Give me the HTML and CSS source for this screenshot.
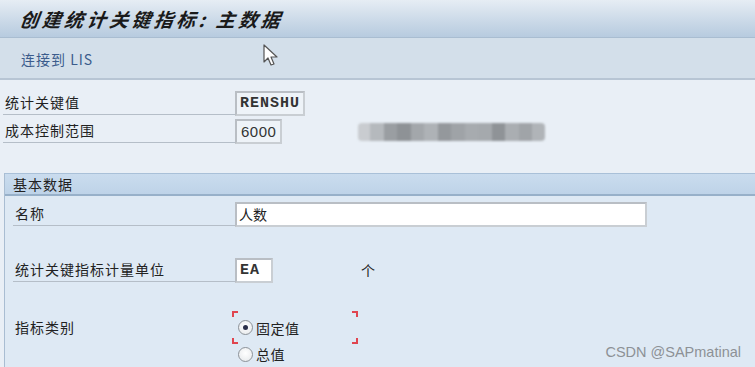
FILE: index.html
```html
<!DOCTYPE html>
<html lang="zh">
<head>
    <meta charset="UTF-8">
    <title>创建统计关键指标: 主数据</title>
    <link rel="stylesheet" href="styles.css">
</head>
<body>
    <header class="titlebar">
        <h1>创建统计关键指标: 主数据</h1>
    </header>
    <nav class="toolbar">
        <a class="tool-link">连接到 LIS</a>
        <svg class="cursor" width="16" height="24" viewBox="0 0 16 24">
            <path d="M1 1 L1 18 L5 14 L8 21 L11 20 L8 13 L14 13 Z" fill="#fff" stroke="#555" stroke-width="1.2" stroke-linejoin="round"/>
        </svg>
    </nav>

    <main class="content">
        <div class="row">
            <label class="label">统计关键值</label>
            <span class="field readonly mono">RENSHU</span>
        </div>
        <div class="row">
            <label class="label">成本控制范围</label>
            <span class="field readonly num">6000</span>
            <div class="blurred">
                <i style="width: 12px; background: #c9ccd0"></i>
                <i style="width: 14px; background: #b5b9bd"></i>
                <i style="width: 13px; background: #9a9ea2"></i>
                <i style="width: 14px; background: #8e9296"></i>
                <i style="width: 13px; background: #a3a7ab"></i>
                <i style="width: 14px; background: #aeb2b6"></i>
                <i style="width: 13px; background: #94989c"></i>
                <i style="width: 14px; background: #9fa3a7"></i>
                <i style="width: 13px; background: #a7abaf"></i>
                <i style="width: 14px; background: #a5a9ad"></i>
                <i style="width: 13px; background: #8f9397"></i>
                <i style="width: 14px; background: #aaaeb2"></i>
                <i style="width: 13px; background: #a0a4a8"></i>
                <i style="width: 13px; background: #b0b4b8"></i>
            </div>
        </div>

        <section class="group">
            <div class="group-title">基本数据</div>
            <div class="group-body">
                <div class="row">
                    <label class="label">名称</label>
                    <span class="field wide">人数</span>
                </div>
                <div class="row row-unit">
                    <label class="label">统计关键指标计量单位</label>
                    <span class="field mono short">EA</span>
                    <span class="unit-text">个</span>
                </div>
                <div class="row row-radio">
                    <label class="label plain">指标类别</label>
                    <div class="radio-box">
                        <span class="corner tl"></span>
                        <span class="corner tr"></span>
                        <span class="corner bl"></span>
                        <span class="corner br"></span>
                        <div class="radio"><span class="dot checked"></span>固定值</div>
                    </div>
                </div>
                <div class="row row-radio2">
                    <div class="radio"><span class="dot"></span>总值</div>
                </div>
            </div>
        </section>
    </main>

    <div class="watermark">CSDN @SAPmatinal</div>
</body>
</html>
```

FILE: styles.css
```css
* {
    margin: 0;
    padding: 0;
    box-sizing: border-box;
}

body {
    width: 755px;
    height: 367px;
    overflow: hidden;
    position: relative;
    font-family: "Noto Sans CJK SC", "Noto Sans", sans-serif;
    font-size: 14px;
    color: #222;
    background: #e9eff6;
}

/* Title */
.titlebar {
    height: 38px;
    background: linear-gradient(to bottom, #e6edf4, #c9d8e7 60%, #b7cbdf);
    border-bottom: 1px solid #a9bdd1;
    padding-left: 20px;
    display: flex;
    align-items: center;
}

.titlebar h1 {
    font-size: 19px;
    font-weight: bold;
    font-style: italic;
    letter-spacing: 3.4px;
    color: #1a1a1a;
    transform: skewX(-8deg);
    margin-top: -1px;
}

/* Toolbar */
.toolbar {
    height: 42px;
    background: #d3dfea;
    border-bottom: 2px solid #b7c5d4;
    padding-left: 21px;
    display: flex;
    align-items: center;
    position: relative;
}

.tool-link {
    color: #3b5c8c;
    font-size: 14px;
    letter-spacing: 1px;
    margin-top: 1px;
}

.cursor {
    position: absolute;
    left: 263px;
    top: 6px;
}

/* Content */
.content {
    padding-top: 11px;
}

.row {
    display: flex;
    align-items: flex-end;
    height: 25px;
    margin-bottom: 3px;
}

.label {
    width: 232px;
    margin-left: 3px;
    padding-left: 2px;
    padding-bottom: 2px;
    border-bottom: 1px solid #b5bec8;
    letter-spacing: 1px;
    line-height: 20px;
    margin-bottom: 1px;
}

.field {
    height: 25px;
    border: 2px solid #b9bec4;
    border-right-color: #c9ced3;
    border-bottom-color: #c9ced3;
    background: #fff;
    padding: 0 3px;
    line-height: 21px;
}

.readonly {
    background: #eef3f8;
}

.mono {
    font-family: "Liberation Mono", monospace;
    font-weight: bold;
    font-size: 15px;
    letter-spacing: 1px;
    color: #333;
}

.num {
    font-family: "Liberation Sans", sans-serif;
    font-size: 15px;
    letter-spacing: 0.5px;
    color: #333;
    padding: 0 4px;
}

.blurred {
    display: flex;
    height: 18px;
    margin-left: 76px;
    margin-bottom: 3px;
    filter: blur(1px);
    border-radius: 4px;
    overflow: hidden;
}

.blurred i {
    display: block;
    height: 100%;
}

/* Group box */
.group {
    margin-top: 29px;
    margin-left: 4px;
    background: #dee9f4;
    border-left: 1px solid #a9bdd2;
    height: 200px;
}

.group-title {
    height: 23px;
    background: linear-gradient(to bottom, #cadcee, #bed3e8);
    border-top: 1px solid #a9c0d8;
    border-bottom: 2px solid #97b0c9;
    padding-left: 8px;
    line-height: 20px;
    letter-spacing: 1px;
}

.group-body {
    padding-top: 6px;
}

.group-body .label {
    margin-left: 8px;
    padding-left: 2px;
    width: 222px;
}

.wide {
    width: 412px;
    padding: 0 2px;
}

.short {
    width: 38px;
}

.row-unit {
    margin-top: 31px;
}

.unit-text {
    margin-left: 88px;
    line-height: 20px;
    margin-bottom: 3px;
}

.row-radio {
    margin-top: 28px;
    margin-bottom: 0;
    height: 33px;
    align-items: center;
}

.label.plain {
    border-bottom: none;
    margin-bottom: 0;
}

.radio-box {
    position: relative;
    width: 126px;
    height: 33px;
    margin-left: -3px;
    display: flex;
    align-items: center;
    padding-left: 6px;
}

.corner {
    position: absolute;
    width: 6px;
    height: 6px;
    border-color: #e0454f;
    border-style: solid;
    border-width: 0;
}

.corner.tl { left: 0; top: 0; border-top-width: 2px; border-left-width: 2px; }
.corner.tr { right: 0; top: 0; border-top-width: 2px; border-right-width: 2px; }
.corner.bl { left: 0; bottom: 0; border-bottom-width: 2px; border-left-width: 2px; }
.corner.br { right: 0; bottom: 0; border-bottom-width: 2px; border-right-width: 2px; }

.radio {
    display: flex;
    align-items: center;
    letter-spacing: 0.5px;
    line-height: 18px;
}

.dot {
    width: 15px;
    height: 15px;
    border-radius: 50%;
    border: 1px solid #8c9298;
    background: radial-gradient(circle at 50% 40%, #ffffff, #e4e7ea);
    margin-right: 3px;
    position: relative;
}

.dot.checked::after {
    content: "";
    position: absolute;
    left: 4px;
    top: 4px;
    width: 5px;
    height: 5px;
    border-radius: 50%;
    background: #2a2f4a;
}

.row-radio2 {
    margin-top: 0;
    height: 20px;
    align-items: center;
    padding-left: 233px;
}

.watermark {
    position: absolute;
    right: 14px;
    bottom: 7px;
    font-family: "Liberation Sans", sans-serif;
    font-size: 14.5px;
    color: #8d9196;
}
```
